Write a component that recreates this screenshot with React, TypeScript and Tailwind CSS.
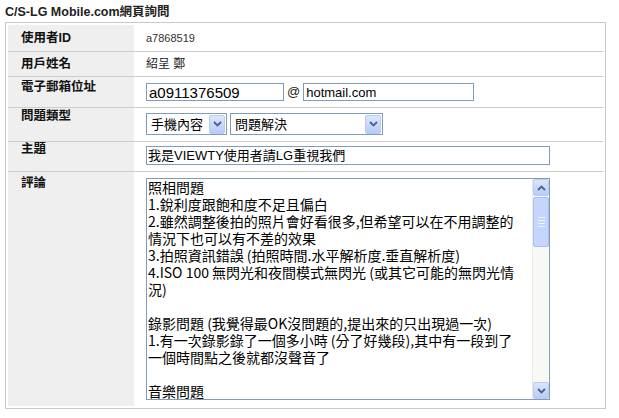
import React from 'react'

const sans = 'font-["Liberation_Sans","Noto_Sans_CJK_TC",sans-serif]'

const commentLines = [
  '照相問題',
  '1.銳利度跟飽和度不足且偏白',
  '2.雖然調整後拍的照片會好看很多,但希望可以在不用調整的',
  '情況下也可以有不差的效果',
  '3.拍照資訊錯誤 (拍照時間.水平解析度.垂直解析度)',
  '4.ISO 100 無閃光和夜間模式無閃光 (或其它可能的無閃光情',
  '況)',
  '',
  '錄影問題 (我覺得最OK沒問題的,提出來的只出現過一次)',
  '1.有一次錄影錄了一個多小時 (分了好幾段),其中有一段到了',
  '一個時間點之後就都沒聲音了',
  '',
  '音樂問題',
]

function Chevron({ up = false }: { up?: boolean }) {
  return (
    <svg width="9" height="6" viewBox="0 0 9 6" className={up ? 'rotate-180' : ''}>
      <path d="M1 1 L4.5 4.5 L8 1" fill="none" stroke="#4d6185" strokeWidth="1.8" />
    </svg>
  )
}

function ArrowButton({ up = false, className = '' }: { up?: boolean; className?: string }) {
  return (
    <div
      className={`flex items-center justify-center rounded-[2px] border border-[#b9cbf3] bg-gradient-to-b from-[#dce6fd] to-[#b7cbf8] ${className}`}
    >
      <Chevron up={up} />
    </div>
  )
}

function Select({ value, width }: { value: string; width: string }) {
  return (
    <div className={`flex h-[22px] items-center border border-[#7f9db9] bg-white ${width}`}>
      <span className="flex-1 pl-[4px] text-[13px] leading-none text-black">{value}</span>
      <ArrowButton className="mr-[1px] h-[19px] w-[16px]" />
    </div>
  )
}

function Row({
  label,
  children,
  className,
  labelClass,
  valueClass,
  last = false,
}: {
  label: string
  children: React.ReactNode
  className: string
  labelClass: string
  valueClass: string
  last?: boolean
}) {
  return (
    <div className={`flex ${last ? '' : 'border-b border-[#cdcdcd]'} ${className}`}>
      <div
        className={`flex w-[126px] shrink-0 bg-[#efefef] pl-[13px] text-[12.5px] font-bold leading-[14px] text-[#111] ${labelClass}`}
      >
        {label}
      </div>
      <div className={`flex flex-1 pl-[12px] ${valueClass}`}>{children}</div>
    </div>
  )
}

export default function App() {
  return (
    <div className={`h-[418px] w-[619px] overflow-hidden bg-white ${sans}`}>
      <div className="h-[22px] pl-[5px] pt-[5px] text-[12.5px] font-bold leading-[14px] text-[#222]">
        C/S-LG Mobile.com網頁詢問
      </div>

      <div className="ml-[5px] w-[601px] border border-[#c9c9c9] p-[2px]">
        <Row label="使用者ID" className="h-[27px]" labelClass="items-center" valueClass="items-center">
          <span className="text-[11px] text-[#333]">a7868519</span>
        </Row>

        <Row label="用戶姓名" className="h-[25px]" labelClass="items-center" valueClass="items-center">
          <span className="text-[12px] text-[#222]">紹呈 鄭</span>
        </Row>

        <Row label="電子郵箱位址" className="h-[31px]" labelClass="pt-[3px]" valueClass="items-start pt-[6px]">
          <div className="flex h-[18px] w-[138px] items-center border border-[#7f9db9] px-[2px] text-[15px] leading-none text-black">
            a0911376509
          </div>
          <span className="ml-[3px] mr-[3px] mt-[2px] text-[13px] leading-[14px] text-[#222]">@</span>
          <div className="flex h-[18px] w-[171px] items-center border border-[#7f9db9] px-[2px] text-[13px] leading-none text-black">
            hotmail.com
          </div>
        </Row>

        <Row label="問題類型" className="h-[34px]" labelClass="pt-[1px]" valueClass="items-start gap-[3px] pt-[5px]">
          <Select value="手機內容" width="w-[81px]" />
          <Select value="問題解決" width="w-[153px]" />
        </Row>

        <Row label="主題" className="h-[30px]" labelClass="pt-[0px]" valueClass="items-start pt-[4px]">
          <div className="flex h-[19px] w-[404px] items-center border border-[#7f9db9] px-[1px] text-[13px] leading-none text-black">
            我是VIEWTY使用者請LG重視我們
          </div>
        </Row>

        <Row label="評論" className="h-[234px]" labelClass="pt-[4px]" valueClass="items-start pt-[6px]" last>
          <div className="flex h-[222px] w-[404px] border border-[#7f9db9] bg-white">
            <div className="flex-1 overflow-hidden pl-[1px] font-['Noto_Sans_CJK_TC',sans-serif] text-[14px] leading-[17px] text-black">
              {commentLines.map((line, i) => (
                <div key={i} className="h-[17px] whitespace-nowrap">
                  {line}
                </div>
              ))}
            </div>
            <div className="flex w-[17px] flex-col border-l border-[#eeede5] bg-[#f8f8f5]">
              <ArrowButton up className="h-[17px] w-full" />
              <div className="mt-[1px] flex h-[50px] flex-col items-center justify-center gap-[2px] rounded-[2px] border border-[#a9bff2] bg-[#c5d5fb]">
                <div className="h-px w-[7px] bg-[#eef3fe]" />
                <div className="h-px w-[7px] bg-[#eef3fe]" />
                <div className="h-px w-[7px] bg-[#eef3fe]" />
                <div className="h-px w-[7px] bg-[#eef3fe]" />
              </div>
              <div className="flex-1" />
              <ArrowButton className="h-[17px] w-full" />
            </div>
          </div>
        </Row>
      </div>
    </div>
  )
}
